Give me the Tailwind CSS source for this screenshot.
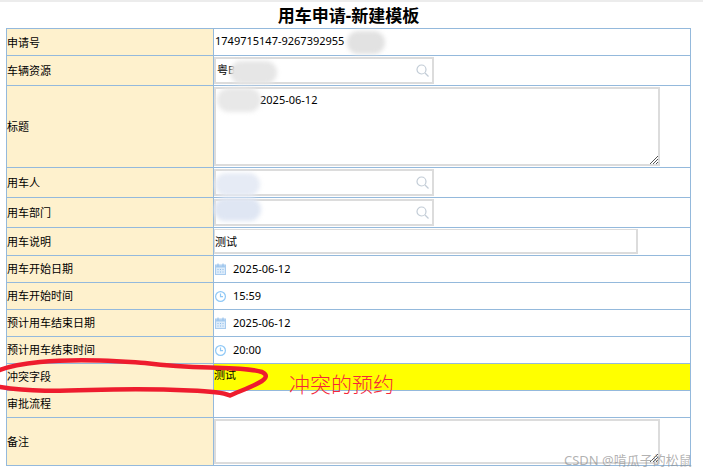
<!DOCTYPE html>
<html lang="zh-CN">
<head>
    <meta charset="UTF-8">
    <title>用车申请-新建模板</title>
    <script src="https://cdn.jsdelivr.net/npm/@tailwindcss/browser@4"></script>
</head>
<body class="bg-white overflow-hidden font-['Noto_Sans','Noto_Sans_CJK_SC',sans-serif] text-[11px] text-black">
    <div class="relative w-[703px] h-[474px] overflow-hidden">
        <div class="h-[2px] bg-[#ececec]"></div>
        <h1 class="h-[26px] leading-[27px] text-center text-[17px] font-bold pr-[6px]">用车申请-新建模板</h1>

        <!-- Form table -->
        <table class="ml-[6px] w-[685px] table-fixed border-collapse border border-[#94b9dc]">
            <colgroup>
                <col class="w-[207px]">
                <col>
            </colgroup>
            <tbody>
                <tr class="h-[27px]">
                    <td class="border border-[#94b9dc] bg-[#fef1cd] p-0 pt-[2px]">申请号</td>
                    <td class="border border-[#94b9dc] p-0 align-middle"><span class="relative -top-px left-px">1749715147-9267392955</span></td>
                </tr>
                <tr class="h-[30px]">
                    <td class="border border-[#94b9dc] bg-[#fef1cd] p-0 pt-[2px]">车辆资源</td>
                    <td class="border border-[#94b9dc] p-0">
                        <div class="w-[220px] h-[27px] border-2 border-[#dcdcdc] flex items-center justify-between pl-[1px] pr-[3px]">
                            <span>粤B</span>
                            <svg class="w-[13px] h-[13px]" viewBox="0 0 13 13" fill="none" stroke="#c2ccd6" stroke-width="1.2"><circle cx="5.5" cy="5.5" r="4.5"/><path d="M9 9l3.5 3.5"/></svg>
                        </div>
                    </td>
                </tr>
                <tr class="h-[82px]">
                    <td class="border border-[#94b9dc] bg-[#fef1cd] p-0 pt-[2px]">标题</td>
                    <td class="border border-[#94b9dc] p-0">
                        <div class="relative w-[446px] h-[79px] border-2 border-[#dcdcdc] pl-[44px] pt-[3px]">
                            2025-06-12
                            <svg class="absolute right-0 bottom-0 w-[9px] h-[9px]" viewBox="0 0 9 9" stroke="#555" stroke-width="1"><path d="M1 9L9 1M4 9L9 4M7 9L9 7"/></svg>
                        </div>
                    </td>
                </tr>
                <tr class="h-[30px]">
                    <td class="border border-[#94b9dc] bg-[#fef1cd] p-0 pt-[2px]">用车人</td>
                    <td class="border border-[#94b9dc] p-0">
                        <div class="w-[220px] h-[27px] border-2 border-[#dcdcdc] flex items-center justify-end pr-[3px]">
                            <svg class="w-[13px] h-[13px]" viewBox="0 0 13 13" fill="none" stroke="#c2ccd6" stroke-width="1.2"><circle cx="5.5" cy="5.5" r="4.5"/><path d="M9 9l3.5 3.5"/></svg>
                        </div>
                    </td>
                </tr>
                <tr class="h-[30px]">
                    <td class="border border-[#94b9dc] bg-[#fef1cd] p-0 pt-[2px]">用车部门</td>
                    <td class="border border-[#94b9dc] p-0">
                        <div class="w-[220px] h-[27px] border-2 border-[#dcdcdc] flex items-center justify-end pr-[3px]">
                            <svg class="w-[13px] h-[13px]" viewBox="0 0 13 13" fill="none" stroke="#c2ccd6" stroke-width="1.2"><circle cx="5.5" cy="5.5" r="4.5"/><path d="M9 9l3.5 3.5"/></svg>
                        </div>
                    </td>
                </tr>
                <tr class="h-[28px]">
                    <td class="border border-[#94b9dc] bg-[#fef1cd] p-0 pt-[2px]">用车说明</td>
                    <td class="border border-[#94b9dc] p-0">
                        <div class="w-[424px] h-[25px] border-2 border-t-[1px] border-l-[1px] border-[#dcdcdc] flex items-center pt-[2px]">测试</div>
                    </td>
                </tr>
                <tr class="h-[27px]">
                    <td class="border border-[#94b9dc] bg-[#fef1cd] p-0">用车开始日期</td>
                    <td class="border border-[#94b9dc] p-0">
                        <div class="flex items-center gap-[7px] pl-px">
                            <svg class="w-[11px] h-[12px]" viewBox="0 0 11 12"><rect x="0.5" y="2" width="10" height="9.5" fill="#dcebfa" stroke="#a9ccef"/><path d="M0.5 3.5h10" stroke="#a9ccef" stroke-width="2"/><path d="M3 0.5v3M8 0.5v3" stroke="#8fbdea"/><path d="M2.5 6.5h1M5 6.5h1M7.5 6.5h1M2.5 9h1M5 9h1M7.5 9h1" stroke="#8fbdea"/></svg>
                            <span>2025-06-12</span>
                        </div>
                    </td>
                </tr>
                <tr class="h-[27px]">
                    <td class="border border-[#94b9dc] bg-[#fef1cd] p-0">用车开始时间</td>
                    <td class="border border-[#94b9dc] p-0">
                        <div class="flex items-center gap-[7px] pl-px">
                            <svg class="w-[11px] h-[12px]" viewBox="0 0 11 12" fill="none" stroke="#8fc8f6" stroke-width="1.2"><circle cx="5.5" cy="6.5" r="4.9"/><path d="M5.5 3.5v3.2h2.5"/></svg>
                            <span>15:59</span>
                        </div>
                    </td>
                </tr>
                <tr class="h-[27px]">
                    <td class="border border-[#94b9dc] bg-[#fef1cd] p-0">预计用车结束日期</td>
                    <td class="border border-[#94b9dc] p-0">
                        <div class="flex items-center gap-[7px] pl-px">
                            <svg class="w-[11px] h-[12px]" viewBox="0 0 11 12"><rect x="0.5" y="2" width="10" height="9.5" fill="#dcebfa" stroke="#a9ccef"/><path d="M0.5 3.5h10" stroke="#a9ccef" stroke-width="2"/><path d="M3 0.5v3M8 0.5v3" stroke="#8fbdea"/><path d="M2.5 6.5h1M5 6.5h1M7.5 6.5h1M2.5 9h1M5 9h1M7.5 9h1" stroke="#8fbdea"/></svg>
                            <span>2025-06-12</span>
                        </div>
                    </td>
                </tr>
                <tr class="h-[27px]">
                    <td class="border border-[#94b9dc] bg-[#fef1cd] p-0">预计用车结束时间</td>
                    <td class="border border-[#94b9dc] p-0">
                        <div class="flex items-center gap-[7px] pl-px">
                            <svg class="w-[11px] h-[12px]" viewBox="0 0 11 12" fill="none" stroke="#8fc8f6" stroke-width="1.2"><circle cx="5.5" cy="6.5" r="4.9"/><path d="M5.5 3.5v3.2h2.5"/></svg>
                            <span>20:00</span>
                        </div>
                    </td>
                </tr>
                <tr class="h-[27px]">
                    <td class="border border-[#94b9dc] bg-[#fef1cd] p-0">冲突字段</td>
                    <td class="border border-[#94b9dc] bg-[#ffff00] p-0 align-top"><span class="relative top-[3px]">测试</span></td>
                </tr>
                <tr class="h-[27px]">
                    <td class="border border-[#94b9dc] bg-[#fef1cd] p-0">审批流程</td>
                    <td class="border border-[#94b9dc] p-0"></td>
                </tr>
                <tr class="h-[48px]">
                    <td class="border border-[#94b9dc] bg-[#fef1cd] p-0 pt-[2px]">备注</td>
                    <td class="border border-[#94b9dc] p-0">
                        <div class="relative w-[446px] h-[45px] border-2 border-[#dcdcdc]">
                            <svg class="absolute right-0 bottom-0 w-[9px] h-[9px]" viewBox="0 0 9 9" stroke="#555" stroke-width="1"><path d="M1 9L9 1M4 9L9 4M7 9L9 7"/></svg>
                        </div>
                    </td>
                </tr>
            </tbody>
        </table>

        <!-- Blurred-out values -->
        <div class="absolute left-[347px] top-[31px] w-[38px] h-[23px] rounded-full bg-[#e2e2e2] blur-[2px]"></div>
        <div class="absolute left-[230px] top-[61px] w-[47px] h-[23px] rounded-full bg-[#e6e6e6] blur-[2px]"></div>
        <div class="absolute left-[217px] top-[88px] w-[44px] h-[24px] rounded-full bg-[#e8e8e8] blur-[2px]"></div>
        <div class="absolute left-[215px] top-[173px] w-[45px] h-[23px] rounded-full bg-[#e6ebf5] blur-[2px]"></div>
        <div class="absolute left-[214px] top-[198px] w-[47px] h-[23px] rounded-full bg-[#dfe6f3] blur-[2px]"></div>

        <!-- Hand-drawn annotation -->
        <svg class="absolute left-0 top-0 w-[703px] h-[474px] pointer-events-none" viewBox="0 0 703 474" fill="none">
            <path d="M0 370C10 366 20 364 40 362C60 360 80 360 100 360.5C120 361 130 362 145 363C170 366 190 367 210 367.5C230 368 250 368 262 372C268 375 266 378 262 381C252 387 240 391 230 395.5C222 392 205 391 190 390.5C160 389 120 389 90 390C60 391 30 392 0 387" stroke="#ee1c2e" stroke-width="4.5" stroke-linejoin="round" stroke-linecap="round"/>
        </svg>
        <div class="absolute left-[289px] top-[369px] text-[21px] leading-[30px] font-light text-[#f5263a]">冲突的预约</div>

        <div class="absolute left-[564px] top-[452px] text-[13px] leading-[17px] text-[#8f8f8f]/70">CSDN @啃瓜子的松鼠</div>
    </div>
</body>
</html>
